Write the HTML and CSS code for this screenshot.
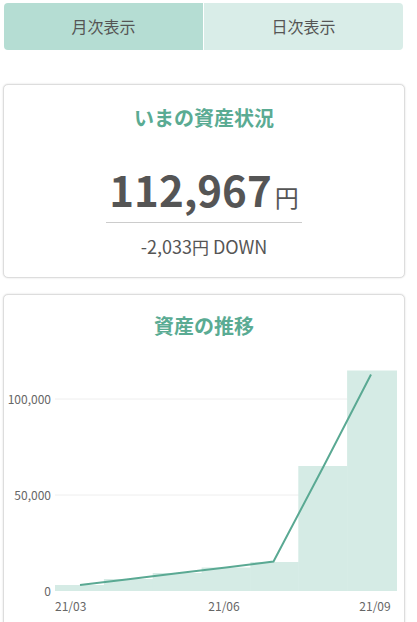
FILE: index.html
```html
<!DOCTYPE html>
<html lang="ja">
<head>
    <meta charset="UTF-8">
    <meta name="viewport" content="width=device-width, initial-scale=1.0">
    <title>資産</title>
    <link rel="stylesheet" href="styles.css">
</head>
<body>

    <div class="page">
        <div class="tabs">
            <div class="tab active">月次表示</div>
            <div class="tab">日次表示</div>
        </div>

        <div class="card summary">
            <h2 class="card-title">いまの資産状況</h2>
            <div class="amount-wrap">
                <span class="amount">112,967<span class="yen">円</span></span>
            </div>
            <div class="diff">-2,033<span class="yen-small">円</span> DOWN</div>
        </div>

        <div class="card history">
            <h2 class="card-title">資産の推移</h2>
            <svg class="chart" width="400" height="290" viewBox="4 341 400 290">
                <!-- grid -->
                <line class="grid" x1="55" y1="400" x2="397" y2="400"/>
                <line class="grid" x1="55" y1="496" x2="397" y2="496"/>

                <!-- bars -->
                <rect class="bar" x="55" y="586" width="49.4" height="6"/>
                <rect class="bar" x="103.9" y="580" width="49.3" height="12"/>
                <rect class="bar" x="152.7" y="574" width="49.4" height="18"/>
                <rect class="bar" x="201.6" y="568.5" width="49.3" height="23.5"/>
                <rect class="bar" x="250.4" y="563" width="48.4" height="29"/>
                <rect class="bar" x="298.3" y="467" width="49.3" height="125"/>
                <rect class="bar" x="347.1" y="371.5" width="49.9" height="220.5"/>

                <polyline class="line" points="80,586 128.3,580.2 177.2,574.3 226,568.4 273.5,562.5 323.5,467.5 371,375.5"/>

                <!-- axis labels -->
                <text class="axis" x="51" y="404.5" text-anchor="end">100,000</text>
                <text class="axis" x="51" y="500.5" text-anchor="end">50,000</text>
                <text class="axis" x="51" y="596.5" text-anchor="end">0</text>

                <text class="axis" x="55" y="611.5">21/03</text>
                <text class="axis" x="224" y="611.5" text-anchor="middle">21/06</text>
                <text class="axis" x="375" y="611.5" text-anchor="middle">21/09</text>
            </svg>
        </div>
    </div>

</body>
</html>
```

FILE: styles.css
```css
body {
    margin: 0;
    background-color: #fff;
    color: #555;
    font-family: "Noto Sans CJK JP", "Noto Sans", sans-serif;
}
.page {
    width: 402px;
    margin-left: 3px;
    padding-top: 3px;
}
.tabs {
    display: flex;
    gap: 1px;
    margin: 0 1px 0 1px;
}
.tab {
    flex: 1;
    height: 47px;
    line-height: 47px;
    text-align: center;
    font-size: 16px;
    color: #555;
    background-color: #d9ede8;
}
.tab:first-child {
    border-radius: 4px 0 0 4px;
}
.tab:last-child {
    border-radius: 0 4px 4px 0;
    margin-right: 1px;
}
.tab.active {
    background-color: #b5ddd3;
}
.card {
    background-color: #fff;
    border: 1px solid #ddd;
    border-radius: 5px;
    box-shadow: 0 0 2px rgba(0, 0, 0, 0.15);
    text-align: center;
}
.summary {
    margin-top: 34px;
    height: 192px;
}
.history {
    margin-top: 16px;
    overflow: hidden;
}
.card-title {
    margin: 0;
    padding-top: 19px;
    line-height: 28px;
    font-size: 20px;
    font-weight: bold;
    color: #5aab93;
}
.history .card-title {
    padding-top: 17px;
}
.amount-wrap {
    margin-top: 32px;
    line-height: 1;
}
.amount {
    display: inline-block;
    padding: 0 3px 8px;
    line-height: 50px;
    font-size: 42px;
    font-weight: bold;
    border-bottom: 1px solid #ccc;
}
.yen {
    margin-left: 3px;
    line-height: 1;
    font-size: 24px;
    font-weight: normal;
}
.diff {
    margin-top: 11px;
    line-height: 24px;
    font-size: 18px;
}
.yen-small {
    font-size: 17px;
}
.chart {
    display: block;
}
.grid {
    stroke: #eeeeee;
    stroke-width: 1;
}
.bar {
    fill: #d5ebe5;
}
.line {
    fill: none;
    stroke: #5aa993;
    stroke-width: 2;
}
.axis {
    font-size: 12px;
    fill: #666;
}
```
